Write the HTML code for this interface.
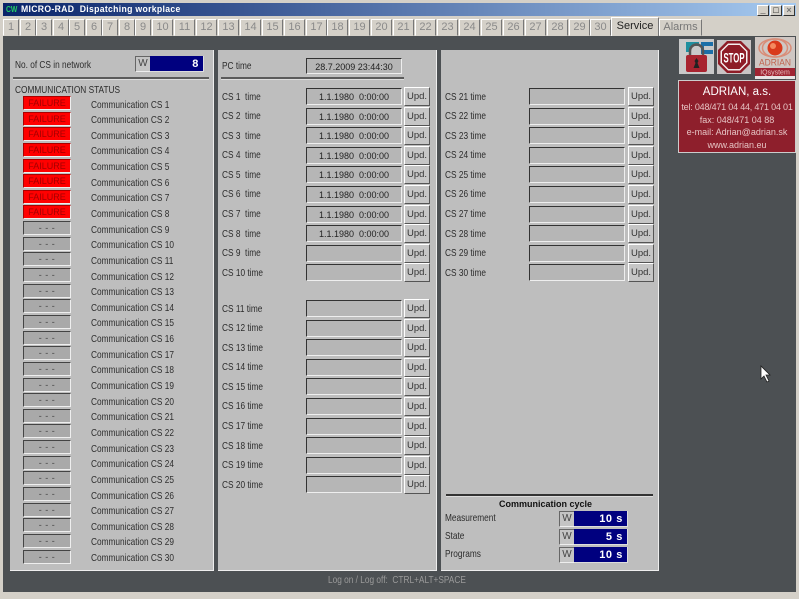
<!DOCTYPE html>
<html><head><meta charset="utf-8"><style>
*{box-sizing:border-box}
html,body{margin:0;padding:0;width:799px;height:599px;overflow:hidden;background:#d4d0c8}
body{position:relative;font:10.5px/12px "Liberation Sans",sans-serif;color:#2c2c2c}
div{position:absolute;white-space:nowrap}
#title{left:3px;top:3px;width:793px;height:13px;background:linear-gradient(90deg,#0a246a,#a6caf0)}
#title b{position:absolute;left:18px;top:1px;color:#fff;font-size:9.5px;letter-spacing:.35px;transform:scaleX(.91);transform-origin:0 50%}
#title i{position:absolute;left:3px;top:1px;color:#2c6;font:bold 8px/11px "Liberation Sans",sans-serif;transform:scaleX(.85);transform-origin:0 50%}
.wb{top:5px;width:12px;height:11px;background:#d4d0c8;border:1px solid;border-color:#fff #333 #333 #fff;font:bold 9px/9px "Liberation Sans",sans-serif;text-align:center;color:#111}
#tabbar{left:0;top:17px;width:799px;height:19px}
.t{top:2px;height:17px;background:#d4d0c8;border:1px solid;border-color:#fff #777 transparent #fff;color:#8a8a8a;font-size:11px;line-height:15px;text-align:center}
#bg{left:3px;top:36px;width:793px;height:556px;background:#4c5053}
.p{background:#bebebe;border-right:1px solid #eee;border-bottom:1px solid #eee;top:50px;height:521px}
.hr{height:2px;background:#5b5b5b;border-bottom:1px solid #ddd;box-sizing:content-box}
.x,.n,.u u{transform:scaleX(.79);transform-origin:0 50%}
.lst{left:0;width:203px}
.r{position:relative;height:15.655px;display:block}
.s{position:absolute;left:13px;top:0;width:48px;height:14px;background:#a9a9a9;border:1px solid;border-color:#444 #eee #eee #444;color:#444;font-size:9px;line-height:12px;text-align:center;letter-spacing:.5px}
.f{background:#f00;border-color:#a00 #eee #eee #a00;color:#a40000;letter-spacing:0}
.n{position:absolute;left:81px;top:2.500px;color:#2e2e2e}
.col{width:220px}
.u{position:relative;height:19.6px;display:block}
.u u{text-decoration:none;position:absolute;left:4px;top:2.500px}
.b{position:absolute;left:88px;top:0;width:96px;height:17px;background:#b6b6b6;border:1px solid;border-color:#333 #eee #eee #333;text-align:center;font-size:9px;line-height:16px;color:#222;white-space:pre}
.d{position:absolute;left:186px;top:-1px;width:26px;height:19px;background:#c6c6c6;border:1px solid;border-color:#fff #555 #555 #fff;text-align:center;line-height:17px;color:#333;font-size:9.5px}
.rt .d{left:187px}
.w{width:16px;height:16px;background:#c4c4c4;border:1px solid;border-color:#666 #eee #eee #666;text-align:center;line-height:14px;color:#444;font-size:10px}
.v{background:#00007f;color:#fff;font-weight:bold;text-align:right;height:16px;line-height:16px;font-size:11px;padding-right:4px;letter-spacing:.6px;border-bottom:1px solid #ddd;border-right:1px solid #ddd}
.c{left:0;width:116px;text-align:center;color:#e6c3c3}
</style></head><body>

<div id="title"><i>CW</i><b>MICRO-RAD&nbsp; Dispatching workplace</b></div>
<div class="wb" style="left:757px">_</div><div class="wb" style="left:770px">□</div><div class="wb" style="left:783px;color:#777">×</div>

<div id="bg"></div>

<div id="tabbar">
<div class="t" style="left:3px;width:16px">1</div><div class="t" style="left:20px;width:16px">2</div><div class="t" style="left:36px;width:16px">3</div><div class="t" style="left:53px;width:16px">4</div><div class="t" style="left:69px;width:16px">5</div><div class="t" style="left:86px;width:16px">6</div><div class="t" style="left:102px;width:16px">7</div><div class="t" style="left:119px;width:16px">8</div><div class="t" style="left:135px;width:16px">9</div><div class="t" style="left:152px;width:21px">10</div><div class="t" style="left:174px;width:21px">11</div><div class="t" style="left:196px;width:21px">12</div><div class="t" style="left:218px;width:21px">13</div><div class="t" style="left:240px;width:21px">14</div><div class="t" style="left:262px;width:21px">15</div><div class="t" style="left:284px;width:21px">16</div><div class="t" style="left:306px;width:21px">17</div><div class="t" style="left:327px;width:21px">18</div><div class="t" style="left:349px;width:21px">19</div><div class="t" style="left:371px;width:21px">20</div><div class="t" style="left:393px;width:21px">21</div><div class="t" style="left:415px;width:21px">22</div><div class="t" style="left:437px;width:21px">23</div><div class="t" style="left:459px;width:21px">24</div><div class="t" style="left:481px;width:21px">25</div><div class="t" style="left:503px;width:21px">26</div><div class="t" style="left:525px;width:21px">27</div><div class="t" style="left:547px;width:21px">28</div><div class="t" style="left:569px;width:21px">29</div><div class="t" style="left:590px;width:21px">30</div>
<div class="t" style="left:611px;top:0;width:48px;height:19px;color:#222;line-height:16px;border-bottom:0">Service</div>
<div class="t" style="left:659px;width:43px;color:#777">Alarms</div>
</div>

<!-- Left panel -->
<div class="p" style="left:10px;width:204px">
<div class="x" style="left:5px;top:9px">No. of CS in network</div>
<div class="w" style="left:125px;top:6px">W</div>
<div class="v" style="left:140px;top:6px;width:54px">8</div>
<div class="hr" style="left:3px;top:27px;width:196px"></div>
<div class="x" style="left:5px;top:34px">COMMUNICATION STATUS</div>
<div class="lst" style="top:46px">
<span class="r"><span class="s f">FAILURE</span><span class="n">Communication CS 1</span></span>
<span class="r"><span class="s f">FAILURE</span><span class="n">Communication CS 2</span></span>
<span class="r"><span class="s f">FAILURE</span><span class="n">Communication CS 3</span></span>
<span class="r"><span class="s f">FAILURE</span><span class="n">Communication CS 4</span></span>
<span class="r"><span class="s f">FAILURE</span><span class="n">Communication CS 5</span></span>
<span class="r"><span class="s f">FAILURE</span><span class="n">Communication CS 6</span></span>
<span class="r"><span class="s f">FAILURE</span><span class="n">Communication CS 7</span></span>
<span class="r"><span class="s f">FAILURE</span><span class="n">Communication CS 8</span></span>
<span class="r"><span class="s">- - -</span><span class="n">Communication CS 9</span></span>
<span class="r"><span class="s">- - -</span><span class="n">Communication CS 10</span></span>
<span class="r"><span class="s">- - -</span><span class="n">Communication CS 11</span></span>
<span class="r"><span class="s">- - -</span><span class="n">Communication CS 12</span></span>
<span class="r"><span class="s">- - -</span><span class="n">Communication CS 13</span></span>
<span class="r"><span class="s">- - -</span><span class="n">Communication CS 14</span></span>
<span class="r"><span class="s">- - -</span><span class="n">Communication CS 15</span></span>
<span class="r"><span class="s">- - -</span><span class="n">Communication CS 16</span></span>
<span class="r"><span class="s">- - -</span><span class="n">Communication CS 17</span></span>
<span class="r"><span class="s">- - -</span><span class="n">Communication CS 18</span></span>
<span class="r"><span class="s">- - -</span><span class="n">Communication CS 19</span></span>
<span class="r"><span class="s">- - -</span><span class="n">Communication CS 20</span></span>
<span class="r"><span class="s">- - -</span><span class="n">Communication CS 21</span></span>
<span class="r"><span class="s">- - -</span><span class="n">Communication CS 22</span></span>
<span class="r"><span class="s">- - -</span><span class="n">Communication CS 23</span></span>
<span class="r"><span class="s">- - -</span><span class="n">Communication CS 24</span></span>
<span class="r"><span class="s">- - -</span><span class="n">Communication CS 25</span></span>
<span class="r"><span class="s">- - -</span><span class="n">Communication CS 26</span></span>
<span class="r"><span class="s">- - -</span><span class="n">Communication CS 27</span></span>
<span class="r"><span class="s">- - -</span><span class="n">Communication CS 28</span></span>
<span class="r"><span class="s">- - -</span><span class="n">Communication CS 29</span></span>
<span class="r"><span class="s">- - -</span><span class="n">Communication CS 30</span></span>
</div>
</div>

<!-- Middle panel -->
<div class="p" style="left:218px;width:219px">
<div class="x" style="left:4px;top:10px">PC time</div>
<div class="b" style="left:88px;top:8px;width:96px;height:16px">28.7.2009 23:44:30</div>
<div class="hr" style="left:3px;top:27px;width:183px"></div>
<div class="col" style="left:0;top:38px">
<span class="u"><u>CS 1&nbsp; time</u><span class="b">1.1.1980  0:00:00</span><span class="d">Upd.</span></span>
<span class="u"><u>CS 2&nbsp; time</u><span class="b">1.1.1980  0:00:00</span><span class="d">Upd.</span></span>
<span class="u"><u>CS 3&nbsp; time</u><span class="b">1.1.1980  0:00:00</span><span class="d">Upd.</span></span>
<span class="u"><u>CS 4&nbsp; time</u><span class="b">1.1.1980  0:00:00</span><span class="d">Upd.</span></span>
<span class="u"><u>CS 5&nbsp; time</u><span class="b">1.1.1980  0:00:00</span><span class="d">Upd.</span></span>
<span class="u"><u>CS 6&nbsp; time</u><span class="b">1.1.1980  0:00:00</span><span class="d">Upd.</span></span>
<span class="u"><u>CS 7&nbsp; time</u><span class="b">1.1.1980  0:00:00</span><span class="d">Upd.</span></span>
<span class="u"><u>CS 8&nbsp; time</u><span class="b">1.1.1980  0:00:00</span><span class="d">Upd.</span></span>
<span class="u"><u>CS 9&nbsp; time</u><span class="b"></span><span class="d">Upd.</span></span>
<span class="u"><u>CS 10 time</u><span class="b"></span><span class="d">Upd.</span></span>
</div>
<div class="col" style="left:0;top:250px">
<span class="u"><u>CS 11 time</u><span class="b"></span><span class="d">Upd.</span></span>
<span class="u"><u>CS 12 time</u><span class="b"></span><span class="d">Upd.</span></span>
<span class="u"><u>CS 13 time</u><span class="b"></span><span class="d">Upd.</span></span>
<span class="u"><u>CS 14 time</u><span class="b"></span><span class="d">Upd.</span></span>
<span class="u"><u>CS 15 time</u><span class="b"></span><span class="d">Upd.</span></span>
<span class="u"><u>CS 16 time</u><span class="b"></span><span class="d">Upd.</span></span>
<span class="u"><u>CS 17 time</u><span class="b"></span><span class="d">Upd.</span></span>
<span class="u"><u>CS 18 time</u><span class="b"></span><span class="d">Upd.</span></span>
<span class="u"><u>CS 19 time</u><span class="b"></span><span class="d">Upd.</span></span>
<span class="u"><u>CS 20 time</u><span class="b"></span><span class="d">Upd.</span></span>
</div>
</div>

<!-- Right panel -->
<div class="p rt" style="left:441px;width:218px">
<div class="col" style="left:0;top:38px">
<span class="u"><u>CS 21 time</u><span class="b"></span><span class="d">Upd.</span></span>
<span class="u"><u>CS 22 time</u><span class="b"></span><span class="d">Upd.</span></span>
<span class="u"><u>CS 23 time</u><span class="b"></span><span class="d">Upd.</span></span>
<span class="u"><u>CS 24 time</u><span class="b"></span><span class="d">Upd.</span></span>
<span class="u"><u>CS 25 time</u><span class="b"></span><span class="d">Upd.</span></span>
<span class="u"><u>CS 26 time</u><span class="b"></span><span class="d">Upd.</span></span>
<span class="u"><u>CS 27 time</u><span class="b"></span><span class="d">Upd.</span></span>
<span class="u"><u>CS 28 time</u><span class="b"></span><span class="d">Upd.</span></span>
<span class="u"><u>CS 29 time</u><span class="b"></span><span class="d">Upd.</span></span>
<span class="u"><u>CS 30 time</u><span class="b"></span><span class="d">Upd.</span></span>
</div>
<div class="hr" style="left:5px;top:444px;width:207px;background:#333"></div>
<div style="left:1px;top:448px;width:207px;text-align:center;font-weight:bold;color:#111;font-size:9px">Communication cycle</div>
<div class="x" style="left:4px;top:462px">Measurement</div>
<div class="w" style="left:118px;top:461px">W</div><div class="v" style="left:133px;top:461px;width:54px">10 s</div>
<div class="x" style="left:4px;top:480px">State</div>
<div class="w" style="left:118px;top:479px">W</div><div class="v" style="left:133px;top:479px;width:54px">5 s</div>
<div class="x" style="left:4px;top:498px">Programs</div>
<div class="w" style="left:118px;top:497px">W</div><div class="v" style="left:133px;top:497px;width:54px">10 s</div>
</div>

<div class="x" style="left:328px;top:574px;color:#9a9a9a">Log on / Log off:&nbsp; CTRL+ALT+SPACE</div>

<!-- Logos -->
<svg style="position:absolute;left:679px;top:39px" width="35" height="35" viewBox="0 0 35 35"><rect width="35" height="35" fill="#c9c9c9"/><path d="M7 3h13v4H12v6H7z" fill="#1f8f9f"/><path d="M22 3h12v4H25v4h9v4H22z" fill="#1c6fa8"/><path d="M11 17v-5a6.500 6.500 0 0 1 13 0v5" fill="none" stroke="#555" stroke-width="2.500"/><rect x="7" y="16" width="21" height="17" rx="2" fill="#a82430"/><path d="M17.500 19l2 3-1 2 2 5h-6l2-5-1-2z" fill="#222"/></svg>
<svg style="position:absolute;left:717px;top:40px" width="34" height="34" viewBox="0 0 34 34"><rect width="34" height="34" fill="#c9c4c4"/><path d="M10 1h14l9 9v14l-9 9H10l-9-9V10z" fill="#8e1c26"/><path d="M11 3.500h12l7.500 7.500v12L23 30.500H11L3.500 23V11z" fill="#f4eeee"/><path d="M11.500 5h11L29 11.500v11L22.500 29h-11L5 22.500v-11z" fill="#8e1c26"/><text x="17" y="22.500" text-anchor="middle" font-family="Liberation Sans" font-weight="bold" font-size="14" textLength="21" lengthAdjust="spacingAndGlyphs" fill="#fff">STOP</text></svg>
<svg style="position:absolute;left:755px;top:37px" width="40" height="42" viewBox="0 0 40 42"><rect width="40" height="42" fill="#cfc7c3"/><ellipse cx="20" cy="11" rx="16" ry="9" fill="none" stroke="#d98d78" stroke-width="1.500"/><ellipse cx="20" cy="11" rx="12.500" ry="9" fill="none" stroke="#d98d78" stroke-width="1.500"/><circle cx="20" cy="11" r="7.500" fill="#d93a1c"/><circle cx="18" cy="9" r="3" fill="#f58a60"/><text x="20" y="28.500" text-anchor="middle" font-family="Liberation Sans" font-size="9" textLength="32" lengthAdjust="spacingAndGlyphs" fill="#c0634d">ADRIAN</text><rect y="31" width="40" height="8" fill="#a02432"/><text x="20" y="37.500" text-anchor="middle" font-family="Liberation Sans" font-size="7" fill="#e8c0c0">IQsystem</text><rect y="39" width="40" height="3" fill="#e8e4e4"/></svg>

<div style="left:678px;top:80px;width:118px;height:73px;background:#8e1f2c;border:1px solid #ccc">
<div class="c" style="top:4px;font-size:11.500px;color:#fff;line-height:14px">ADRIAN, a.s.</div>
<div class="c" style="top:20px;font-size:9px;letter-spacing:-.2px">tel: 048/471 04 44, 471 04 01</div>
<div class="c" style="top:33px;font-size:9px">fax: 048/471 04 88</div>
<div class="c" style="top:45px;font-size:9px">e-mail: Adrian@adrian.sk</div>
<div class="c" style="top:58px;font-size:9px">www.adrian.eu</div>
</div>

<!-- Cursor -->
<svg style="position:absolute;left:760px;top:365px" width="13" height="18" viewBox="0 0 13 18"><path d="M1 1v13l3-3 3 6 2-1-3-6h4z" fill="#fff" stroke="#222" stroke-width=".8"/></svg>

</body></html>
